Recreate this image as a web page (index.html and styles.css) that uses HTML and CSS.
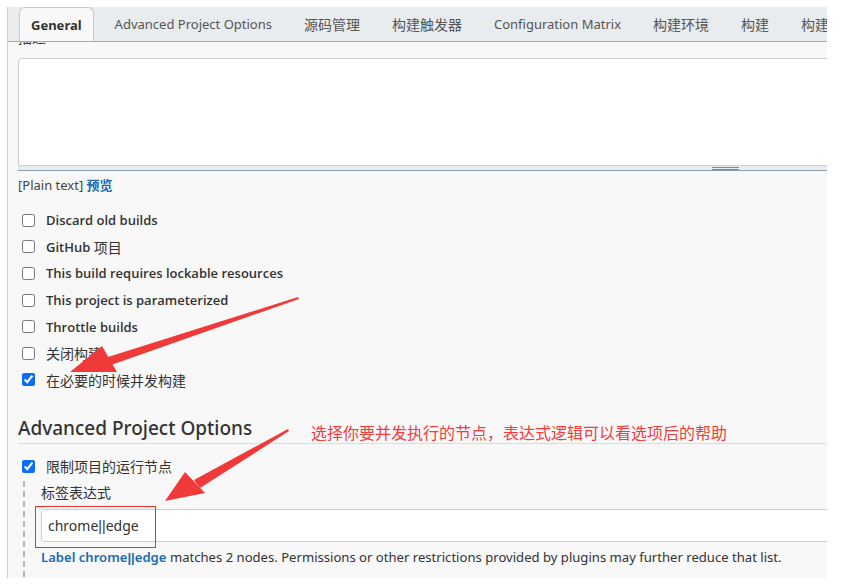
FILE: index.html
```html
<!DOCTYPE html>
<html>
<head>
  <meta charset="UTF-8">
  <title>Configure</title>
  <link rel="stylesheet" href="styles.css">
</head>
<body>
  <div class="page">
    <div class="tabs">
      <div class="tab active">General</div>
      <div class="tab first">Advanced Project Options</div>
      <div class="tab zh">源码管理</div>
      <div class="tab zh">构建触发器</div>
      <div class="tab">Configuration Matrix</div>
      <div class="tab zh">构建环境</div>
      <div class="tab zh">构建</div>
      <div class="tab zh">构建后操作</div>
    </div>

    <div class="content">
      <div class="field-label clipped">描述</div>
      <div class="textarea"></div>
      <div class="resizer"><span class="grip"></span></div>
      <div class="preview">[Plain text] <a class="link">预览</a></div>

      <div class="options">
        <label class="option"><input type="checkbox"> Discard old builds</label>
        <label class="option"><input type="checkbox"> GitHub&nbsp;<span class="zh">项目</span></label>
        <label class="option"><input type="checkbox"> This build requires lockable resources</label>
        <label class="option"><input type="checkbox"> This project is parameterized</label>
        <label class="option"><input type="checkbox"> Throttle builds</label>
        <label class="option"><input type="checkbox"> <span class="zh">关闭构建</span></label>
        <label class="option"><input type="checkbox" checked> <span class="zh">在必要的时候并发构建</span></label>
      </div>

      <h2 class="section-title">Advanced Project Options</h2>

      <label class="option"><input type="checkbox" checked> <span class="zh">限制项目的运行节点</span></label>
      <div class="nested">
        <div class="field-label">标签表达式</div>
        <div class="text-input">chrome<span class="pipes">||</span>edge</div>
        <div class="help"><a class="link">Label chrome<span class="pipes">||</span>edge</a> matches 2 nodes. Permissions or other restrictions provided by plugins may further reduce that list.</div>
      </div>
    </div>

    <div class="note">选择你要并发执行的节点，表达式逻辑可以看选项后的帮助</div>
    <div class="mark-box"></div>
    <svg class="arrows" width="841" height="587" viewBox="0 0 841 587">
      <!-- arrow to the concurrent build option -->
      <polygon points="298,297 108,357 111,365 299,299" fill="#f03a3a"/>
      <polygon points="70,372 102,346 117,372" fill="#f03a3a"/>
      <!-- arrow to the label expression -->
      <polygon points="288,429 194,480 200,488 289,431" fill="#f03a3a"/>
      <polygon points="165,501 185,472 205,493" fill="#f03a3a"/>
    </svg>
  </div>
</body>
</html>
```

FILE: styles.css
```css
body {
  margin: 0;
  background: white;
  font-family: 'Noto Sans', 'Noto Sans CJK SC', sans-serif;
  color: #333;
}
.page {
  position: relative;
  width: 841px;
  height: 587px;
  overflow: hidden;
}
.tabs {
  position: relative;
  z-index: 2;
  display: flex;
  align-items: stretch;
  margin: 7px 0 0 7px;
  width: 820px;
  height: 35px;
  padding-left: 11px;
  box-sizing: border-box;
  background: #e9ecef;
  border-left: 1px solid #d0d0d0;
  border-bottom: 1px solid #a3abb3;
  overflow: hidden;
  white-space: nowrap;
}
.tab {
  display: flex;
  align-items: center;
  padding: 0 16px;
  font-size: 13px;
  color: #555;
}
.tab.zh {
  font-size: 14px;
}
.tab.first {
  padding-left: 21px;
}
.tab.active {
  padding: 0 11px;
  margin-bottom: -1px;
  background: #f8f8f8;
  border: 1px solid #c8c8c8;
  border-bottom: none;
  border-radius: 6px 6px 0 0;
  font-weight: 700;
  color: #333;
}
.content {
  position: relative;
  margin-left: 7px;
  width: 820px;
  height: 536px;
  padding-left: 10px;
  box-sizing: border-box;
  background: #f8f8f8;
  border-left: 1px solid #d0d0d0;
  overflow: hidden;
}
.field-label {
  font-size: 14px;
  line-height: 19px;
}
.field-label.clipped {
  margin-top: -14px;
}
.textarea {
  margin-top: 11px;
  width: 1200px;
  height: 106px;
  background: white;
  border: 1px solid #cfcfcf;
  border-radius: 4px 0 0 0;
}
.resizer {
  width: 1200px;
  height: 4px;
  background: #e9ecef;
  border-bottom: 1px solid #8d9ba8;
  position: relative;
}
.grip {
  position: absolute;
  left: 694px;
  top: 1px;
  width: 27px;
  height: 1px;
  border-top: 1px solid #888;
  border-bottom: 1px solid #888;
}
.preview {
  margin-top: 5px;
  font-size: 13px;
  line-height: 18px;
  color: #444;
}
.link {
  color: #1c6bb0;
  font-weight: 600;
}
.pipes {
  font-family: 'Liberation Sans', sans-serif;
}
.options {
  margin-top: 13px;
  display: flex;
  flex-direction: column;
}
.option {
  display: flex;
  align-items: center;
  height: 26.6px;
  font-family: 'Open Sans', 'Noto Sans CJK SC', sans-serif;
  font-size: 13px;
  font-weight: 600;
  color: #333;
}
.option .zh {
  font-size: 14px;
  font-weight: 400;
}
.option input {
  width: 13px;
  height: 13px;
  margin: 0 11px 0 4px;
  accent-color: #0b6cf5;
}
.section-title {
  margin: 22px 0 9px;
  padding-bottom: 2px;
  width: 1200px;
  font-size: 19px;
  line-height: 26px;
  font-weight: 500;
  color: #333;
  border-bottom: 1px solid #dcdcdc;
}
.nested {
  margin: 1px 0 0 5px;
  padding: 2px 0 20px 16px;
  border-left: 2px dashed #b5b5b5;
}
.text-input {
  margin-top: 7px;
  width: 1200px;
  height: 31px;
  padding-left: 6px;
  line-height: 31px;
  font-size: 14px;
  background: white;
  border: 1px solid #cfcfcf;
  border-radius: 3px;
}
.help {
  margin-top: 6px;
  font-size: 13.1px;
  line-height: 18px;
  color: #333;
  white-space: nowrap;
}
.note {
  position: absolute;
  left: 311px;
  top: 423px;
  font-size: 16px;
  line-height: 20px;
  color: #f43c3c;
}
.mark-box {
  position: absolute;
  left: 35px;
  top: 506px;
  width: 119px;
  height: 40px;
  border: 1px solid #e83030;
}
.arrows {
  position: absolute;
  left: 0;
  top: 0;
  pointer-events: none;
}
```
